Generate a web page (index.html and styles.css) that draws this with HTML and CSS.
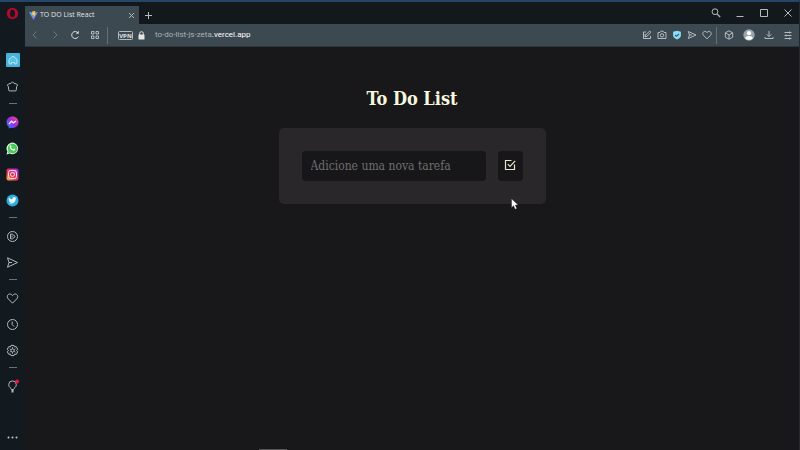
FILE: index.html
```html
<!DOCTYPE html>
<html lang="pt-BR">
<head>
<meta charset="utf-8">
<meta name="viewport" content="width=device-width, initial-scale=1">
<title>TO DO List React</title>
<link rel="stylesheet" href="styles.css">
</head>
<body>
<aside class="sidebar">
  <button class="brand" aria-label="Menu"><svg width="13" height="13" viewBox="0 0 13 13"><ellipse cx="6.5" cy="6.5" rx="5.7" ry="5.7" fill="#b3082f"/><ellipse cx="6.5" cy="6.5" rx="2.500" ry="3.800" fill="#14191e"/></svg></button>
  <nav class="side-list">
    <button class="side-item" aria-label="Home"><svg width="14" height="14" viewBox="0 0 14 14"><rect width="14" height="14" rx="1" fill="#49b2da"/><path d="M3 10V6.400L7 3l4 3.400V10a1 1 0 0 1-1 1H8.600V9.500H5.400V11H4a1 1 0 0 1-1-1z" fill="#5cbfe3" stroke="#b4e8fa"/></svg></button>
    <button class="side-item" aria-label="Favoritos"><svg class="line" width="13" height="13" viewBox="0 0 13 13"><path d="M5.200 3.200Q6.500.4 7.800 3.200L10.600 4Q12.600 4.800 10.600 6.700L10.300 9.800Q10.200 11.600 8.300 10.900H4.700Q2.800 11.600 2.700 9.800L2.400 6.700Q.4 4.800 2.400 4z"/></svg></button>
    <hr>
    <button class="side-item" aria-label="Messenger"><svg width="13" height="13" viewBox="0 0 13 13"><defs><linearGradient id="msg" x1="0" y1="1" x2="1" y2="0"><stop offset="0" stop-color="#188cff"/><stop offset=".5" stop-color="#9a2be5"/><stop offset="1" stop-color="#f44f79"/></linearGradient></defs><path d="M6.500.5c3.500 0 6 2.400 6 5.700s-2.500 5.700-6 5.700l-1.700-.2-2 .8-.1-1.700A5.600 5.600 0 0 1 .5 6.200C.5 2.900 3 .5 6.500.5z" fill="url(#msg)"/><path d="M3 8l2.400-2.800 2 1.600L10 5" stroke="#f3e4ff" stroke-width="1.400" fill="none"/></svg></button>
    <button class="side-item" aria-label="WhatsApp"><svg width="13" height="13" viewBox="0 0 13 13"><path d="M.5 12.500l.9-3A5.800 5.800 0 1 1 3.700 11.600z" fill="#e2f7e1"/><path d="M1.800 11.300l.7-2.200a4.800 4.800 0 1 1 1.500 1.500z" fill="#43cd56"/><path d="M4 3.600c.7-.6 1.200-.4 1.600.9l-.5.8c.5 1 1.100 1.600 2.100 2l.8-.7c1.300.4 1.500.9 1 1.500-.8 1-2 .8-3.300-.1C4 6.800 3.200 5 4 3.600z" fill="#fff"/></svg></button>
    <button class="side-item" aria-label="Instagram"><svg width="13" height="13" viewBox="0 0 13 13"><defs><linearGradient id="ig" x1="0" y1="1" x2=".8" y2="0"><stop offset="0" stop-color="#f8bb45"/><stop offset=".45" stop-color="#ec384d"/><stop offset="1" stop-color="#a52ccf"/></linearGradient></defs><rect x=".5" y=".5" width="12" height="12" rx="2" fill="url(#ig)"/><g fill="none" stroke="#f9e1eb"><rect x="2.500" y="2.500" width="8" height="8" rx="2"/><circle cx="6.500" cy="6.500" r="2"/></g><circle cx="9" cy="4" r=".6" fill="#fff"/></svg></button>
    <button class="side-item" aria-label="Twitter"><svg width="13" height="13" viewBox="0 0 13 13"><circle cx="6.500" cy="6.500" r="6" fill="#2eaae0"/><path d="M2.900 3.500c1 1.200 2 1.700 3.500 1.800C6.200 3 8.500 2.600 9.300 3.700l1.200-.4-.7 1.300c0 4.200-3.700 6-7.100 4.400 1 0 1.600-.2 2.100-.6-1-.1-1.500-.7-1.700-1.300h.8c-.9-.4-1.300-1-1.300-1.800l.8.200c-.8-.7-.9-1.300-.5-2z" fill="#eaf8ff"/></svg></button>
    <hr>
    <button class="side-item" aria-label="Player"><svg class="line" width="13" height="13" viewBox="0 0 13 13"><circle cx="6.500" cy="6.500" r="5"/><path d="M4.500 4.200h2l2.700 2.300-2.700 2.300h-2zM6 5.600v1.800"/></svg></button>
    <button class="side-item" aria-label="Flow"><svg class="line" width="13" height="13" viewBox="0 0 13 13"><path d="M1.500 1.800l10 4.700-10 4.700 1.500-4.700zM3 6.500h3"/></svg></button>
    <hr>
    <button class="side-item" aria-label="Curtidas"><svg class="line" width="13" height="13" viewBox="0 0 13 13"><path d="M6.500 11.200L2.200 6.800C.2 4.500 1.700 2 3.900 2c1.300 0 2.100.8 2.600 1.700C7 2.800 7.800 2 9.100 2c2.200 0 3.700 2.500 1.700 4.800z"/></svg></button>
    <button class="side-item" aria-label="Histórico"><svg class="line" width="13" height="13" viewBox="0 0 13 13"><circle cx="6.500" cy="6.500" r="5"/><path d="M6.200 3.500v3.200l1.800 1.800"/></svg></button>
    <button class="side-item" aria-label="Configurações"><svg class="line" width="13" height="13" viewBox="0 0 13 13"><path d="M5 1.400h3l.5 1.500 1.700-.3 1.500 2.600-1.100 1.300 1.100 1.300-1.500 2.600-1.700-.3-.5 1.500H5l-.5-1.500-1.700.3-1.500-2.600 1.100-1.300-1.100-1.300 1.500-2.600 1.700.3z"/><circle cx="6.500" cy="6.500" r="1.600"/><path d="M6.500 3v2M6.500 8v2M3.500 4.800l1.600.9M8 7.300l1.600.9M3.500 8.200l1.600-.9M8 5.700l1.600-.9" stroke-width=".7"/></svg></button>
    <hr>
    <button class="side-item" aria-label="Dicas"><svg class="line" width="15" height="15" viewBox="0 0 15 15"><path d="M6.500 10.500C6.300 9 3.700 8.400 3.700 5.700a3.800 3.800 0 0 1 7.600 0c0 2.700-2.600 3.300-2.800 4.800z"/><path d="M7.500 10.500v3" stroke-width="2"/><circle cx="12" cy="2.500" r="2" fill="#ee1540" stroke="none"/></svg></button>
  </nav>
  <button class="side-more" aria-label="Mais"><svg width="11" height="3" viewBox="0 0 11 3" fill="#c6cacc"><circle cx="1.500" cy="1.500" r="1"/><circle cx="5.500" cy="1.500" r="1"/><circle cx="9.500" cy="1.500" r="1"/></svg></button>
</aside>
<div class="window">
  <header>
    <div class="tabstrip">
      <div class="tab">
        <svg width="9" height="9" viewBox="0 0 9 9"><defs><linearGradient id="vite" x2=".8" y2="1"><stop offset="0" stop-color="#3cc8f5"/><stop offset="1" stop-color="#b44df5"/></linearGradient></defs><path d="M0 1L4.500 9 9 1l-4.500.8z" fill="url(#vite)"/><path d="M3.200.6L6.500 0 5.600 2.500l1.200-.2L4.700 6.200 4.800 4H3.400z" fill="#ffd43b"/></svg>
        <span class="tab-title">TO DO List React</span>
        <button aria-label="Fechar aba"><svg class="line" width="7" height="7" viewBox="0 0 7 7"><path d="M1 1l5 5M6 1L1 6"/></svg></button>
      </div>
      <button class="new-tab" aria-label="Nova aba"><svg class="line" width="7" height="7" viewBox="0 0 7 7"><path d="M3.500 0v7M0 3.500h7"/></svg></button>
      <div class="window-controls">
        <button aria-label="Pesquisar"><svg class="line" width="10" height="10" viewBox="0 0 10 10"><circle cx="4" cy="3.700" r="2.900"/><path d="M6 5.800l3.200 3.200" stroke-width="1.200"/></svg></button>
        <button aria-label="Minimizar"><svg class="line" width="10" height="10" viewBox="0 0 10 10"><path d="M1.500 8.500h7"/></svg></button>
        <button aria-label="Maximizar"><svg class="line" width="10" height="10" viewBox="0 0 10 10"><path d="M1.500 1.500h7v7h-7z"/></svg></button>
        <button aria-label="Fechar"><svg class="line" width="10" height="10" viewBox="0 0 10 10"><path d="M1.500 1.500l7 7M8.500 1.500l-7 7"/></svg></button>
      </div>
    </div>
    <div class="toolbar">
      <div class="nav-buttons">
        <button class="faded" aria-label="Voltar"><svg class="line" width="10" height="10" viewBox="0 0 10 10"><path d="M6.500 1.500L3 5l3.500 3.500"/></svg></button>
        <button class="faded" aria-label="Avançar"><svg class="line" width="10" height="10" viewBox="0 0 10 10"><path d="M3.500 1.500L7 5 3.500 8.500"/></svg></button>
        <button aria-label="Recarregar"><svg class="line bright" width="10" height="10" viewBox="0 0 10 10"><path d="M8.300 6.700A3.500 3.500 0 1 1 8 2.900"/><path d="M8.700.8v3H5.800z" fill="#dde2e5" stroke="none"/></svg></button>
        <button aria-label="Acesso rápido"><svg class="line" width="10" height="10" viewBox="0 0 10 10"><path d="M1.500 1.500h2.500v2.500H1.500zM6 1.500h2.500v2.500H6zM1.500 6h2.500v2.500H1.500zM6 6h2.500v2.500H6z"/></svg></button>
      </div>
      <div class="address">
        <button class="vpn" aria-label="VPN"><svg class="line" width="15" height="9" viewBox="0 0 15 9"><rect x=".5" y=".5" width="14" height="8" rx="1"/><text x="7.500" y="7" text-anchor="middle">VPN</text></svg></button>
        <svg class="lock" width="7" height="9" viewBox="0 0 7 9"><path d="M1.700 4V2.500a1.800 1.800 0 0 1 3.600 0V4" fill="none" stroke="#e2e6e8"/><rect x=".5" y="3.500" width="6" height="5" rx=".5" fill="#e2e6e8"/></svg>
        <span class="url">to-do-list-js-zeta<span class="domain">.vercel.app</span></span>
      </div>
      <div class="page-actions">
        <button aria-label="Editar"><svg class="line" width="10" height="10" viewBox="0 0 10 10"><path d="M4 2H1.500v6.500h7V6M3.200 6.900l.4-1.800L7.700 1l1.300 1.300-4.100 4.100zM3.200 4v3"/></svg></button>
        <button aria-label="Captura"><svg class="line" width="10" height="10" viewBox="0 0 10 10"><path d="M1 2.500h2l.8-1.300h2.400L7 2.500h2v6H1z"/><circle cx="5" cy="5.300" r="1.700"/></svg></button>
        <button aria-label="Proteção"><svg width="10" height="10" viewBox="0 0 10 10"><path d="M5 .7l3.900 1v3.600C8.900 7.300 7.200 8.700 5 9.500 2.800 8.700 1.100 7.300 1.100 5.300V1.700z" fill="#8bdcf7"/><path d="M3.200 5l1.300 1.300L7 3.800" fill="none" stroke="#285267" stroke-width="1.100"/></svg></button>
        <button aria-label="Enviar"><svg class="line" width="10" height="10" viewBox="0 0 10 10"><path d="M1.300 1.500L9 5 1.300 8.500 2.500 5zM2.500 5H5"/></svg></button>
        <button aria-label="Favoritar"><svg class="line" width="10" height="10" viewBox="0 0 10 10"><path d="M5 8.900L1.500 5.300C0 3.500 1.200 1.300 3 1.300c1 0 1.600.6 2 1.400.4-.8 1-1.400 2-1.400 1.800 0 3 2.200 1.500 4z"/></svg></button>
      </div>
      <div class="browser-actions">
        <button aria-label="Extensões"><svg class="line" width="10" height="10" viewBox="0 0 10 10"><path d="M5 .8l3.700 2v4.400L5 9.200l-3.700-2V2.800zM1.300 2.800L5 5l3.700-2.200M5 5v4.200"/></svg></button>
        <button aria-label="Perfil"><svg width="12" height="12" viewBox="0 0 12 12"><circle cx="6" cy="6" r="5.700" fill="#9ba4aa"/><circle cx="6" cy="4.200" r="2.100" fill="#fff"/><path d="M2.200 9.500C2.500 6.200 9.500 6.200 9.800 9.500 8 11.400 4 11.400 2.200 9.500z" fill="#fff"/></svg></button>
        <button aria-label="Downloads"><svg class="line" width="10" height="10" viewBox="0 0 10 10"><path d="M5 1v5.500M2.800 4.400L5 6.600l2.200-2.200M1 7v1.500h8V7"/></svg></button>
        <button aria-label="Ajustes"><svg class="line" width="10" height="10" viewBox="0 0 10 10"><path d="M1.500 2.500h7M1.500 5.500h7M1.500 8.500h7M6.500 1.500v2M3 4.500v2M6.500 7.500v2"/></svg></button>
      </div>
    </div>
  </header>
  <main>
    <h1>To Do List</h1>
    <form class="card">
      <input type="text" aria-label="Nova tarefa" placeholder="Adicione uma nova tarefa">
      <button type="button" class="add" aria-label="Adicionar"><svg width="12" height="12" viewBox="0 0 12 12" fill="none" stroke="#e7e7d0" stroke-width="1.200"><path d="M7.500 1.500h-6v9h9v-5"/><path d="M3.800 5.200l2.200 2.200 5.200-5.600"/></svg></button>
    </form>
  </main>
</div>
<div class="status-strip"></div>
<svg class="cursor" width="8" height="12" viewBox="0 0 8 12"><path d="M.6.8v8.800l2-1.900 1.500 3.500 1.700-.8-1.500-3.300h2.800z" fill="#fff" stroke="#29272a" stroke-width=".4"/></svg>
</body>
</html>
```
FILE: styles.css
```css
* {
  box-sizing: border-box;
}

body {
  margin: 0;
  min-height: 100vh;
  display: grid;
  grid-template-columns: 25px 1fr;
  background: #18171a;
  border-top: 2px solid #254767;
  border-right: 1px solid #222a30;
  font-family: "Open Sans", sans-serif;
  color: #e2e6e8;
}

button {
  display: flex;
  align-items: center;
  justify-content: center;
  padding: 0;
  border: 0;
  background: none;
  color: inherit;
}

svg {
  display: block;
  flex: none;
}

.line {
  fill: none;
  stroke: #b4babe;
  stroke-width: 1;
}

.bright {
  stroke: #dde2e5;
}

.sidebar {
  display: flex;
  flex-direction: column;
  align-items: center;
  background: #131a1f;
}

.brand {
  height: 22px;
}

.side-list {
  display: flex;
  flex-direction: column;
  align-items: center;
  margin-top: 23px;
}

.side-item {
  width: 25px;
  height: 26px;
}

.side-list hr {
  width: 8px;
  height: 1px;
  margin: 4px 0 5px;
  border: 0;
  background: #687076;
}

.side-more {
  width: 25px;
  height: 25px;
  margin-top: auto;
}

.window {
  display: flex;
  flex-direction: column;
  min-width: 0;
}

.tabstrip {
  display: flex;
  align-items: stretch;
  height: 22px;
  background: #13181c;
}

.tab {
  display: flex;
  align-items: center;
  gap: 2px;
  width: 114px;
  margin-top: 4px;
  padding: 0 4px;
  background: #3d4950;
}

.tab-title {
  flex: 1;
  font-size: 7px;
  line-height: 10px;
  white-space: nowrap;
}

.new-tab {
  width: 18px;
  padding-top: 4px;
}

.window-controls {
  display: flex;
  align-items: center;
  gap: 14px;
  margin-left: auto;
  padding-right: 6px;
}

.toolbar {
  display: flex;
  align-items: center;
  height: 23px;
  background: #3d4950;
  border-bottom: 1px solid #2c353a;
}

.nav-buttons {
  display: flex;
  align-items: center;
  gap: 10px;
  height: 17px;
  padding: 0 7px 0 5px;
  border-right: 1px solid #66727a;
}

.faded {
  opacity: 0.4;
}

.address {
  display: flex;
  align-items: center;
  flex: 1;
  gap: 5px;
  padding-left: 10px;
}

.vpn text {
  fill: #e2e6e8;
  stroke: none;
  font-family: "Open Sans", sans-serif;
  font-size: 6px;
  font-weight: 700;
}

.url {
  padding-left: 5px;
  font-family: Roboto, sans-serif;
  font-size: 8px;
  line-height: 12px;
  color: #a9b2b7;
}

.domain {
  color: #fff;
}

.page-actions {
  display: flex;
  align-items: center;
  gap: 5px;
  height: 17px;
  padding-right: 4px;
  border-right: 1px solid #66727a;
}

.browser-actions {
  display: flex;
  align-items: center;
  gap: 9px;
  padding: 0 6px 0 7px;
}

main {
  display: flex;
  flex-direction: column;
  align-items: center;
  padding: 39px 16px;
  font-family: "Roboto Slab", "DejaVu Serif Condensed", "DejaVu Serif", serif;
}

h1 {
  margin: 0 0 16px;
  font-size: 18px;
  line-height: 26px;
  font-weight: 700;
  color: #f7f7df;
}

.card {
  display: flex;
  gap: 12px;
  width: 100%;
  max-width: 267px;
  padding: 23px;
  border-radius: 5px;
  background: #29272a;
}

.card input {
  flex: 1;
  min-width: 0;
  height: 30px;
  padding: 0 9px;
  border: 0;
  border-radius: 4px;
  background: #171618;
  font-family: inherit;
  font-size: 12px;
  color: #f7f7df;
}

.card input::placeholder {
  color: #706e70;
  opacity: 1;
}

.add {
  width: 25px;
  height: 30px;
  padding-bottom: 2px;
  border-radius: 4px;
  background: #171618;
}

.status-strip {
  position: absolute;
  left: 259px;
  bottom: 0;
  width: 28px;
  height: 1px;
  background: #555456;
}

.cursor {
  position: absolute;
  left: 511px;
  top: 198px;
}
```
